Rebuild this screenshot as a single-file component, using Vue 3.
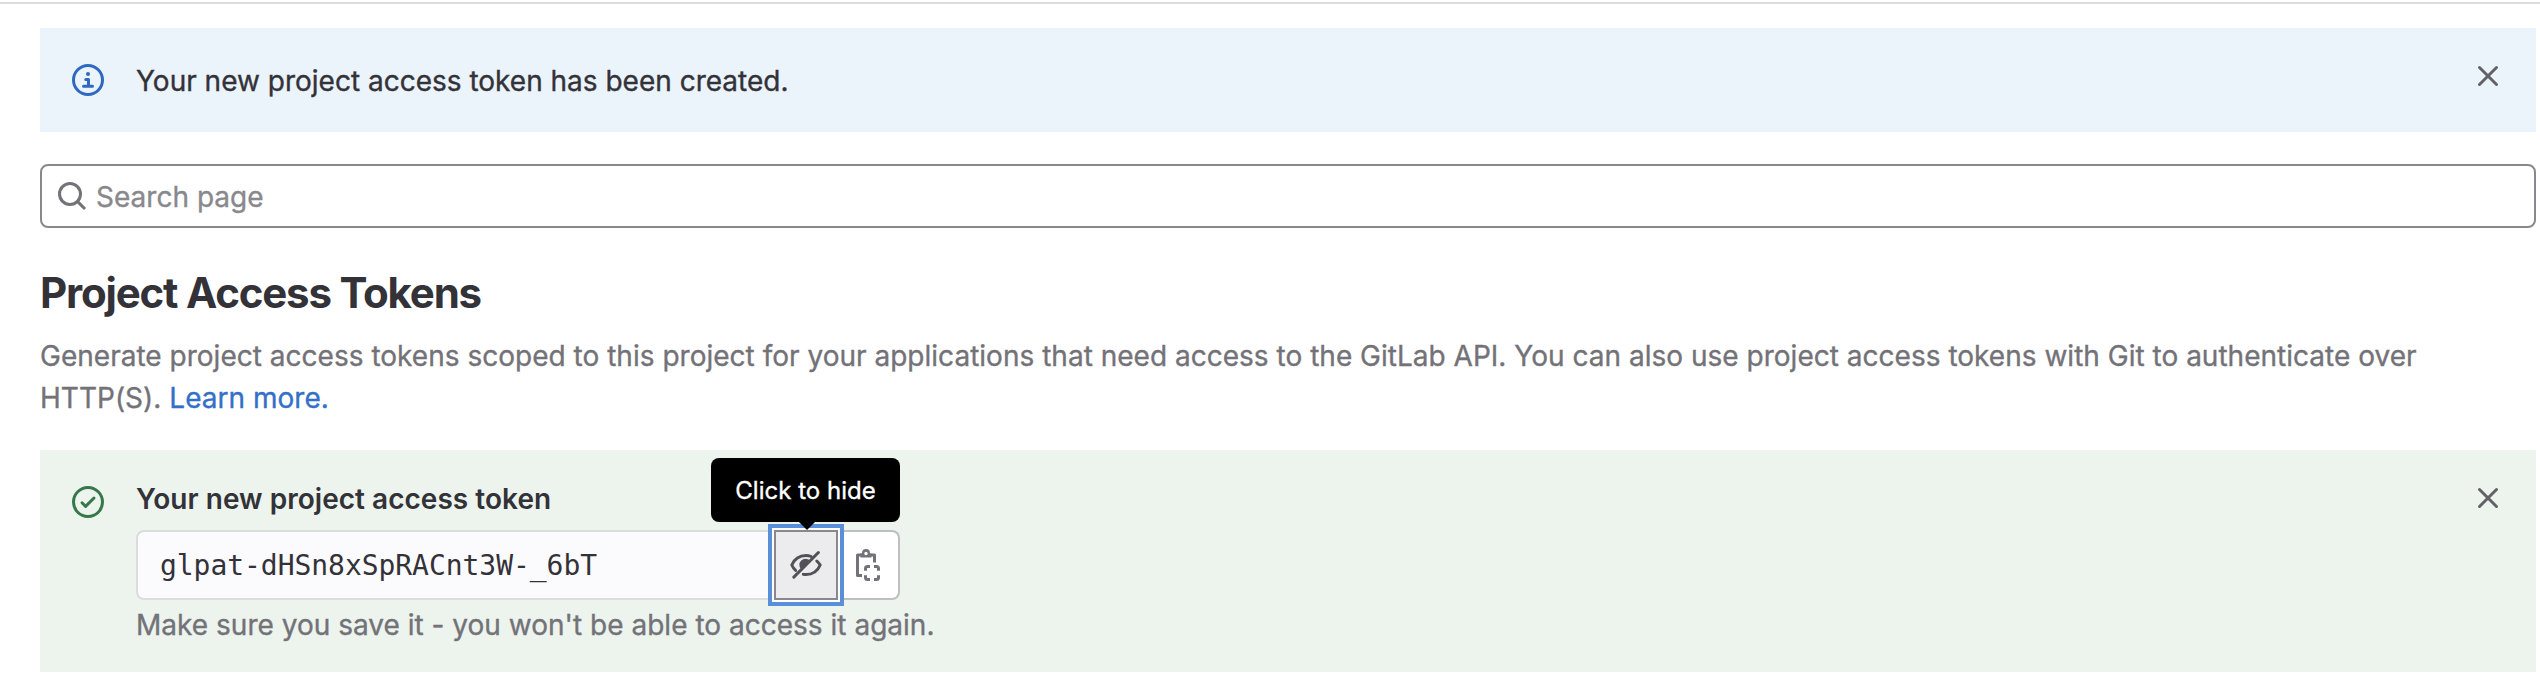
<script setup>
import { ref } from 'vue'

const token = ref('glpat-dHSn8xSpRACnt3W-_6bT')
</script>

<template>
  <main class="page">
    <section class="alert info">
      <svg class="status" viewBox="0 0 16 16">
        <circle cx="8" cy="8" r="7.25" />
        <circle class="dot" cx="8" cy="5" r="1" />
        <path d="M6.9 7.75h1.35v3.4M5.75 11.15h4.5" />
      </svg>
      <p class="message">Your new project access token has been created.</p>
      <svg class="close" viewBox="0 0 16 16"><path d="M3.75 3.75l8.5 8.5M12.25 3.75l-8.5 8.5" /></svg>
    </section>

    <div class="search">
      <svg viewBox="0 0 16 16"><circle cx="7" cy="7" r="5.25" /><path d="M10.8 10.8l3.7 3.7" /></svg>
      <span>Search page</span>
    </div>

    <h1>Project Access Tokens</h1>
    <p class="description">
      Generate project access tokens scoped to this project for your applications that need access to the GitLab API. You can also use project access tokens with Git to authenticate over<br>HTTP(S). <a>Learn more.</a>
    </p>

    <section class="alert success">
      <svg class="status" viewBox="0 0 16 16">
        <circle cx="8" cy="8" r="7.25" />
        <path d="M5 8.4l1.8 1.8 4.2-4.2" />
      </svg>
      <div class="body">
        <h2>Your new project access token</h2>
        <div class="group">
          <div class="field">{{ token }}</div>
          <div class="toggle">
            <svg viewBox="0 0 16 16">
              <path d="M14.2 1.75L1.9 14.05" />
              <path d="M10.6 3.75C9.8 3.4 8.9 3.2 8 3.2 4.5 3.2 2 5.4 .9 8c.45 1.05 1.05 1.95 1.9 2.7" />
              <path d="M13.4 6c.65.6 1.3 1.3 1.7 2-1.1 2.6-3.6 4.8-7.1 4.8-.45 0-.9-.04-1.35-.12" />
              <path class="fill" d="M5.6 10.2A3 3 0 0 1 10 5.8z" />
            </svg>
            <div class="tooltip">Click to hide</div>
          </div>
          <div class="copy">
            <svg viewBox="0 0 16 16">
              <path d="M5.2 2.95H2.75v10.3H5M8.8 2.95h2.45v3.8" />
              <path class="fill" fill-rule="evenodd" d="M7 0a2 2 0 0 1 2 2v.3h.75v2h-5.5v-2H5V2a2 2 0 0 1 2-2zm0 1.4a.85.85 0 1 0 0 1.7.85.85 0 0 0 0-1.7z" />
              <path d="M6.75 10.9V9.75a1 1 0 0 1 1-1H9M11 8.75h1.25a1 1 0 0 1 1 1v1.15M13.25 13.1v1.15a1 1 0 0 1-1 1H11M9 15.25H7.75a1 1 0 0 1-1-1V13.1" />
            </svg>
          </div>
        </div>
        <p class="hint">Make sure you save it - you won't be able to access it again.</p>
      </div>
      <svg class="close" viewBox="0 0 16 16"><path d="M3.75 3.75l8.5 8.5M12.25 3.75l-8.5 8.5" /></svg>
    </section>
  </main>
</template>

<style>
body { background: #fff; }
</style>

<style scoped>
* { box-sizing: border-box; margin: 0; }
.page {
  height: 694px;
  margin-top: 2px;
  border-top: 2px solid #dcdcde;
  padding: 24px 4px 0 40px;
  font-family: Inter, "Liberation Sans", sans-serif;
  font-size: 28px;
  line-height: 42px;
  letter-spacing: 0.014px;
  -webkit-text-stroke: 0.35px currentColor;
  color: #333238;
  overflow: hidden;
}
svg {
  display: block;
  flex: none;
  width: 32px;
  height: 32px;
  fill: none;
  stroke: currentColor;
  stroke-width: 1.5;
  stroke-linecap: round;
  stroke-linejoin: round;
}
.dot, .fill { fill: currentColor; stroke: none; }
.alert { display: flex; align-items: flex-start; padding: 0 32px; }
.info { height: 104px; padding-top: 32px; background: #ebf3fb; }
.status { margin-right: 32px; }
.info .status { margin-top: 4px; color: #2f68c0; }
.message { flex: 1; line-height: 42px; letter-spacing: 0; }
.close { color: #626168; }
.search {
  display: flex;
  align-items: center;
  gap: 8px;
  height: 64px;
  margin-top: 32px;
  padding-left: 14px;
  border: 2px solid #89888d;
  border-radius: 8px;
  color: #89888d;
}
.search svg { color: #737278; stroke-linecap: butt; }
.search span { line-height: 40px; padding-top: 2px; }
h1, h2 { -webkit-text-stroke: 0; }
h1 { margin-top: 39px; font-size: 42px; line-height: 52px; font-weight: 700; letter-spacing: -1.19px; }
.description { margin-top: 16px; color: #737278; white-space: nowrap; }
.description a { color: #3470c8; }
.success { height: 222px; margin-top: 31px; padding-top: 32px; background: #ecf4ed; }
.success .status { margin-top: 4px; color: #37784a; }
.body { flex: 1; }
h2 { font-size: 28px; line-height: 34px; font-weight: 600; letter-spacing: 0.03px; }
.group { display: flex; width: 764px; height: 70px; margin-top: 14px; }
.field {
  flex: 1;
  padding-left: 22px;
  border: 2px solid #dcdcde;
  border-right: 0;
  border-radius: 8px 0 0 8px;
  background: #fbfafd;
  font-family: "DejaVu Sans Mono", monospace;
  line-height: 68px;
  letter-spacing: -0.05px;
  -webkit-text-stroke: 0;
}
.toggle, .copy { display: flex; align-items: center; justify-content: center; }
.toggle {
  position: relative;
  width: 64px;
  border: 2px solid #89888d;
  background: #ececef;
  color: #535158;
  box-shadow: 0 0 0 2px #fff, 0 0 0 6px #588fd8;
}
.copy {
  width: 62px;
  border: 2px solid #bfbfc3;
  border-left: 0;
  border-radius: 0 8px 8px 0;
  background: #fff;
  color: #737278;
}
.copy svg { stroke-linecap: butt; }
.tooltip {
  position: absolute;
  z-index: 1;
  left: -65px;
  top: -74px;
  width: 189px;
  height: 64px;
  border-radius: 8px;
  background: #000;
  color: #fff;
  font-size: 24px;
  line-height: 66px;
  text-align: center;
  white-space: nowrap;
}
.tooltip::after {
  content: "";
  position: absolute;
  left: 88px;
  top: 64px;
  border: 8px solid transparent;
  border-top-color: #000;
  border-bottom: 0;
}
.hint { margin-top: 4px; color: #737278; }
</style>
